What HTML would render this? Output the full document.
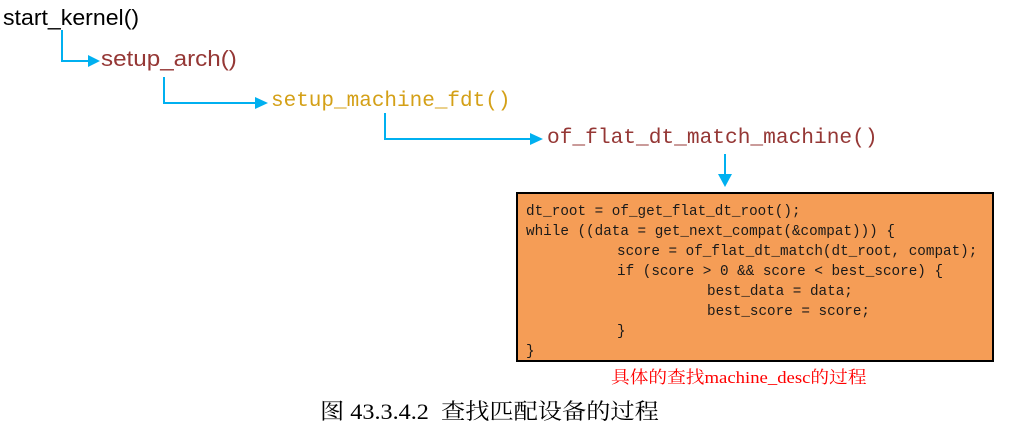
<!DOCTYPE html>
<html><head><meta charset="utf-8"><style>
body{margin:0;width:1023px;height:430px;background:#fff;position:relative;overflow:hidden}
.t{position:absolute;white-space:pre;line-height:1;transform-origin:0 0}
.sans{font-family:"Liberation Sans","Noto Sans CJK SC",sans-serif}
.mono{font-family:"Liberation Mono","Noto Serif CJK SC",monospace;font-weight:300}
.code{position:absolute;font-family:"Liberation Mono",monospace;font-size:14.3px;color:#1a1a1a;white-space:pre;line-height:1}
</style></head><body>
<div class="t sans" style="left:3px;top:7px;font-size:22px;color:#000;transform:scaleX(1.05)">start_kernel()</div>
<div class="t sans" style="left:101px;top:48px;font-size:22px;color:#953735;transform:scaleX(1.1)">setup_arch()</div>
<div class="t mono" style="left:271px;top:91px;font-size:21px;color:#d4a017">setup_machine_fdt()</div>
<div class="t mono" style="left:547px;top:128px;font-size:21.2px;color:#953735">of_flat_dt_match_machine()</div>
<svg width="1023" height="430" style="position:absolute;left:0;top:0">
<g stroke="#00b0f0" stroke-width="2" fill="none">
<polyline points="62,30 62,61 90,61"/>
<polyline points="164,77 164,103 257,103"/>
<polyline points="385,113 385,139 532,139"/>
<line x1="725" y1="154" x2="725" y2="176"/>
</g>
<g fill="#00b0f0">
<polygon points="88,55 100,61 88,67"/>
<polygon points="255,97 268,103 255,109"/>
<polygon points="530,133 543,139 530,145"/>
<polygon points="718,174 732,174 725,187"/>
</g>
<rect x="517" y="193" width="476" height="168" fill="#f59d56" stroke="#000" stroke-width="2"/>
</svg>
<div class="code" style="left:526px;top:205px">dt_root = of_get_flat_dt_root();</div>
<div class="code" style="left:526px;top:225px">while ((data = get_next_compat(&amp;compat))) {</div>
<div class="code" style="left:617px;top:245px">score = of_flat_dt_match(dt_root, compat);</div>
<div class="code" style="left:617px;top:265px">if (score &gt; 0 &amp;&amp; score &lt; best_score) {</div>
<div class="code" style="left:707px;top:285px">best_data = data;</div>
<div class="code" style="left:707px;top:305px">best_score = score;</div>
<div class="code" style="left:617px;top:325px">}</div>
<div class="code" style="left:526px;top:345px">}</div>
<div class="t" style="left:611px;top:369px;font-size:17px;color:#ff0000;font-family:'Liberation Serif','Noto Serif CJK SC',serif;transform:scaleX(1.1)">具体的查找machine_desc的过程</div>
<div class="t" style="left:320px;top:401px;font-size:22px;color:#000;font-family:'Liberation Serif','Noto Serif CJK SC',serif;transform:scaleX(1.1)">图 43.3.4.2&nbsp; 查找匹配设备的过程</div>
</body></html>
